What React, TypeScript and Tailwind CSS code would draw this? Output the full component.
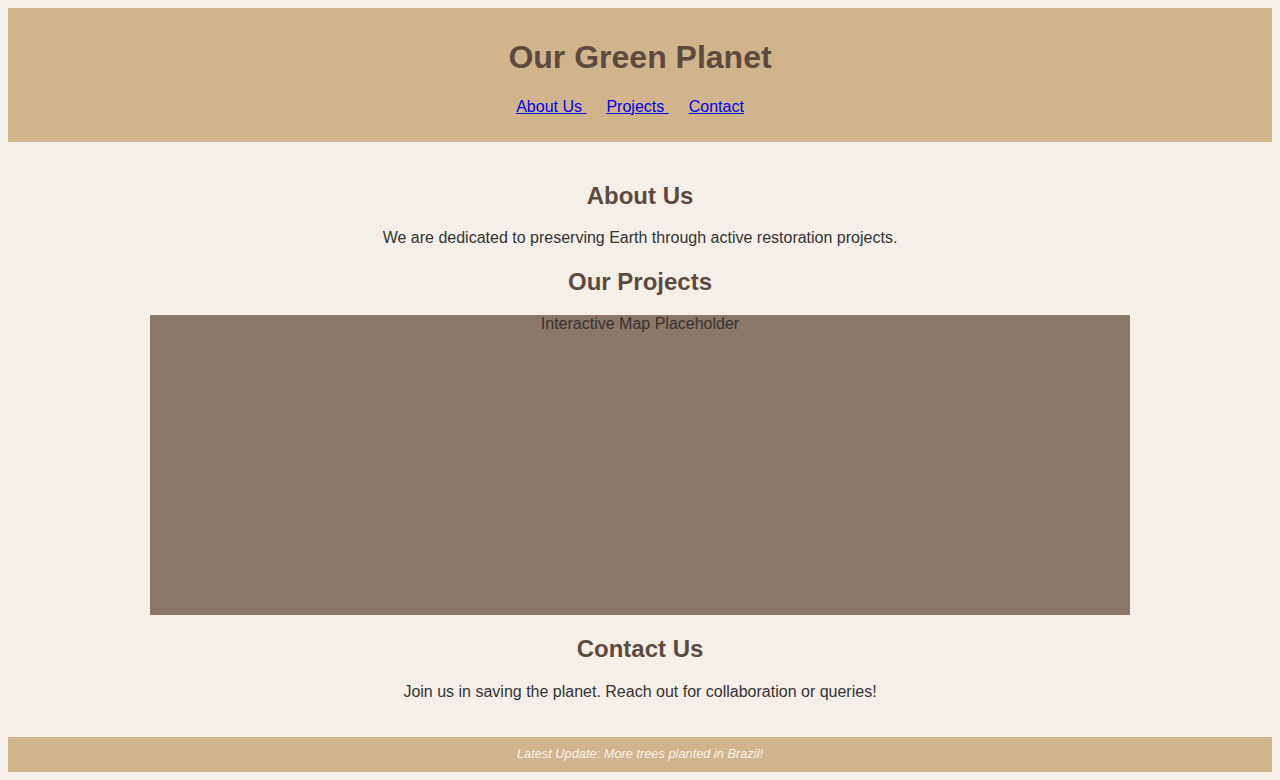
import React from 'react';

const links = ['About Us ', 'Projects ', 'Contact'];

export default function App() {
  return (
    <div className="min-h-screen bg-[#f4f0e9] p-2 font-['Liberation_Sans',Arial,sans-serif] text-[#333]">
      <header className="bg-[#d2b48c] px-[10px] py-[10px] text-center">
        <h1 className="my-[21.44px] text-[32px] font-bold leading-[1.15] text-[#5c4a3f]">
          Our Green Planet
        </h1>
        <nav className="mb-4 text-base leading-[1.15]">
          {links.map((l) => (
            <a key={l} href="#" className="mr-5 text-[#0000ee] underline">
              {l}
            </a>
          ))}
        </nav>
      </header>

      <main className="p-5 text-center">
        <section>
          <h2 className="my-[19.92px] text-2xl font-bold leading-[1.15] text-[#5c4a3f]">About Us</h2>
          <p className="my-4 text-base leading-[1.15]">
            We are dedicated to preserving Earth through active restoration projects.
          </p>
        </section>
        <section>
          <h2 className="my-[19.92px] text-2xl font-bold leading-[1.15] text-[#5c4a3f]">Our Projects</h2>
          <div className="mx-auto h-[300px] w-[980px] bg-[#8c7869] text-base leading-[1.15]">
            Interactive Map Placeholder
          </div>
        </section>
        <section>
          <h2 className="my-[19.92px] text-2xl font-bold leading-[1.15] text-[#5c4a3f]">Contact Us</h2>
          <p className="my-4 text-base leading-[1.15]">
            Join us in saving the planet. Reach out for collaboration or queries!
          </p>
        </section>
      </main>

      <footer className="bg-[#d2b48c] py-[10px] text-center text-[12.8px] italic leading-[1.15] text-[#f7f3ec]">
        Latest Update: More trees planted in Brazil!
      </footer>
    </div>
  );
}
